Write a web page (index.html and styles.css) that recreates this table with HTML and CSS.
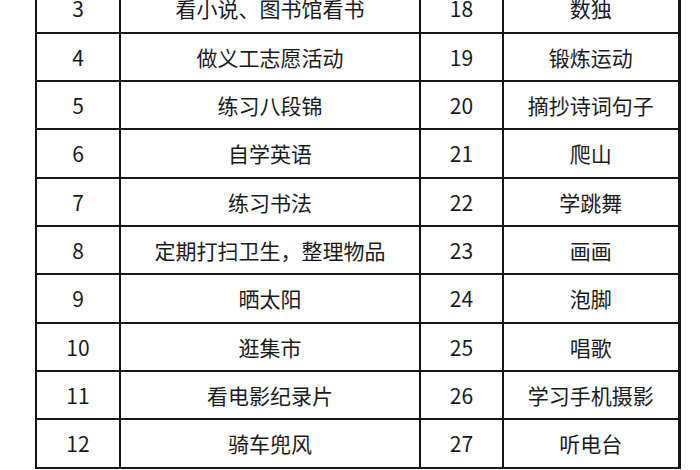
FILE: index.html
```html
<!DOCTYPE html>
<html lang="zh">
<head>
<meta charset="utf-8">
<link rel="stylesheet" href="styles.css">
</head>
<body>
<div class="page">
<table class="grid">
<colgroup>
<col class="c-num"><col class="c-act"><col class="c-num2"><col class="c-act2">
</colgroup>
<tbody>
<tr><td>3</td><td>看小说、图书馆看书</td><td>18</td><td>数独</td></tr>
<tr><td>4</td><td>做义工志愿活动</td><td>19</td><td>锻炼运动</td></tr>
<tr><td>5</td><td>练习八段锦</td><td>20</td><td>摘抄诗词句子</td></tr>
<tr><td>6</td><td>自学英语</td><td>21</td><td>爬山</td></tr>
<tr><td>7</td><td>练习书法</td><td>22</td><td>学跳舞</td></tr>
<tr><td>8</td><td>定期打扫卫生，整理物品</td><td>23</td><td>画画</td></tr>
<tr><td>9</td><td>晒太阳</td><td>24</td><td>泡脚</td></tr>
<tr><td>10</td><td>逛集市</td><td>25</td><td>唱歌</td></tr>
<tr><td>11</td><td>看电影纪录片</td><td>26</td><td>学习手机摄影</td></tr>
<tr><td>12</td><td>骑车兜风</td><td>27</td><td>听电台</td></tr>
</tbody>
</table>
</div>
</body>
</html>
```
FILE: styles.css
```css
html, body {
  margin: 0;
  padding: 0;
  background: #ffffff;
}
.page {
  width: 700px;
  height: 470px;
  overflow: hidden;
  padding-left: 35px;
  box-sizing: border-box;
}
.grid {
  margin-top: -17px;
  border-collapse: collapse;
  table-layout: fixed;
  width: 645px;
  font-family: "Noto Sans CJK SC", "Noto Sans", sans-serif;
  font-size: 21px;
  color: #1a1a1a;
}
.c-num { width: 84px; }
.c-act { width: 300px; }
.c-num2 { width: 83px; }
.c-act2 { width: 176px; }
.grid td {
  border: 2px solid #161616;
  height: 48px;
  padding: 0;
  text-align: center;
  vertical-align: middle;
  line-height: 1;
  white-space: nowrap;
  box-sizing: border-box;
}
.grid tr:nth-child(3n+1) td {
  height: 49px;
}
.grid td:last-child {
  border-right-width: 3px;
}
```
